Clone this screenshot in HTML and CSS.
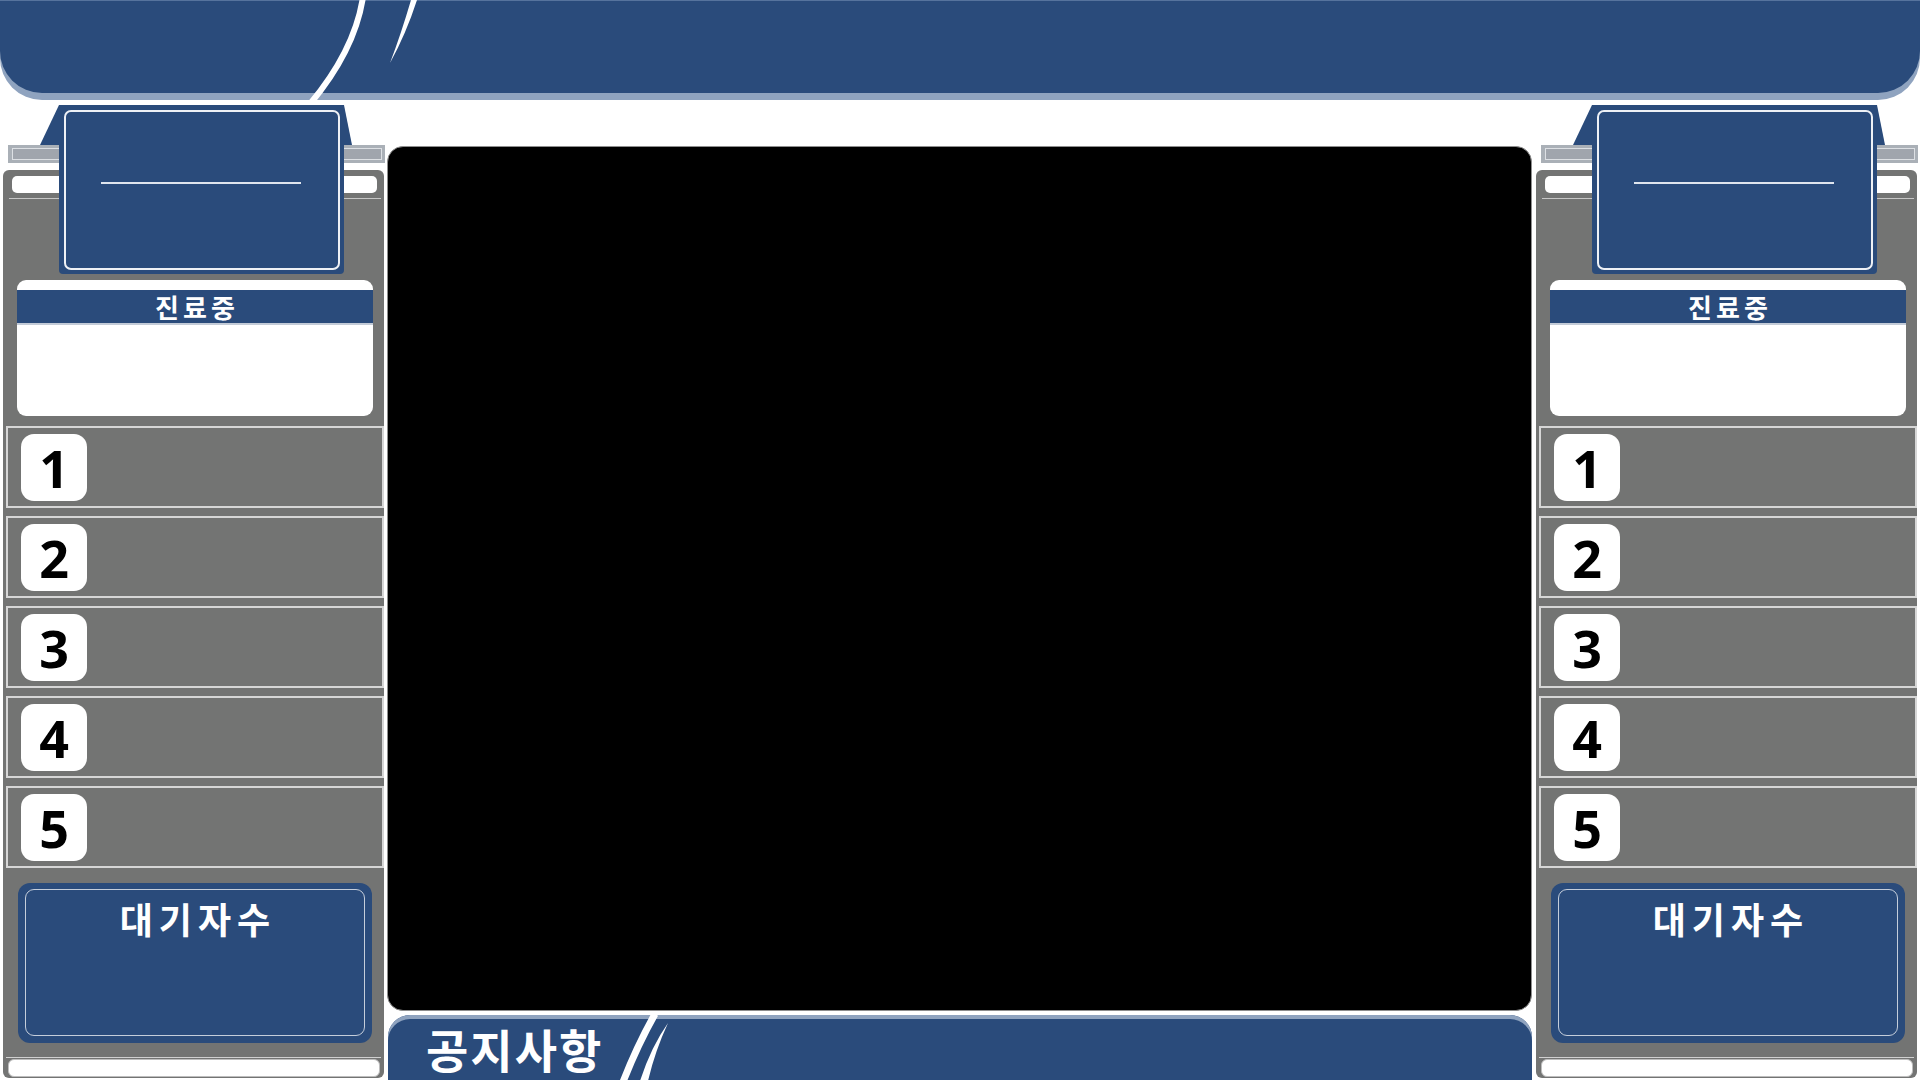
FILE: index.html
```html
<!DOCTYPE html>
<html lang="ko">
<head>
<meta charset="utf-8">
<title>대기 현황</title>
<link rel="stylesheet" href="styles.css">
</head>
<body>
<div class="screen">
  <header class="top">
    <svg class="top-deco" width="460" height="104" viewBox="0 0 460 104">
      <path d="M363,-3 Q355,50 310,104" fill="none" stroke="#ffffff" stroke-width="6"/>
      <path d="M411,0 L417,0 Q406,34 390,63 Q401,34 411,0 Z" fill="#ffffff"/>
    </svg>
  </header>
  <main class="stage">
    <aside class="side side-left">
      <div class="side-inner">
        <div class="tab"><div class="tab-frame"><div class="tab-line"></div></div></div>
        <div class="rail"><div class="rail-inner"></div></div>
        <div class="panel">
          <div class="panel-pill"></div>
          <div class="panel-rule"></div>
          <div class="status-card"><div class="status-head">진료중</div></div>
          <ul class="queue">
            <li class="queue-row"><span class="badge">1</span></li>
            <li class="queue-row"><span class="badge">2</span></li>
            <li class="queue-row"><span class="badge">3</span></li>
            <li class="queue-row"><span class="badge">4</span></li>
            <li class="queue-row"><span class="badge">5</span></li>
          </ul>
          <div class="wait-box"><div class="wait-frame"><span class="wait-title">대기자수</span></div></div>
          <div class="panel-rule panel-rule-bottom"></div>
          <div class="panel-pill panel-pill-bottom"></div>
        </div>
      </div>
    </aside>
    <section class="center">
      <div class="video"></div>
      <div class="notice">
        <span class="notice-title">공지사항</span>
        <svg class="notice-deco" width="300" height="66" viewBox="0 0 300 66">
          <path d="M267,-1 Q249,31 235,67" fill="none" stroke="#ffffff" stroke-width="7"/>
          <path d="M280,8 Q263,32 252,66 L260,66 Q267,36 280,8 Z" fill="#ffffff"/>
        </svg>
      </div>
    </section>
    <aside class="side side-right">
      <div class="side-inner">
        <div class="tab"><div class="tab-frame"><div class="tab-line"></div></div></div>
        <div class="rail"><div class="rail-inner"></div></div>
        <div class="panel">
          <div class="panel-pill"></div>
          <div class="panel-rule"></div>
          <div class="status-card"><div class="status-head">진료중</div></div>
          <ul class="queue">
            <li class="queue-row"><span class="badge">1</span></li>
            <li class="queue-row"><span class="badge">2</span></li>
            <li class="queue-row"><span class="badge">3</span></li>
            <li class="queue-row"><span class="badge">4</span></li>
            <li class="queue-row"><span class="badge">5</span></li>
          </ul>
          <div class="wait-box"><div class="wait-frame"><span class="wait-title">대기자수</span></div></div>
          <div class="panel-rule panel-rule-bottom"></div>
          <div class="panel-pill panel-pill-bottom"></div>
        </div>
      </div>
    </aside>
  </main>
</div>
</body>
</html>
```

FILE: styles.css
```css
* { box-sizing: border-box; }

html, body {
  margin: 0;
  padding: 0;
  background: #ffffff;
}

body {
  width: 1920px;
  height: 1080px;
  overflow: hidden;
  font-family: "Noto Sans CJK KR", "Noto Sans", sans-serif;
}

.screen {
  width: 1920px;
  height: 1080px;
  display: flex;
  flex-direction: column;
}

/* ---------- header ---------- */
.top {
  position: relative;
  height: 93px;
  flex: none;
  background: #2a4b7b;
  border-top: 1px solid #56739d;
  border-radius: 0 0 42px 42px;
  box-shadow: 0 7px 0 #8fa3bf;
  margin-bottom: 7px;
}

.top-deco {
  position: absolute;
  left: 0;
  top: -1px;
  overflow: visible;
}

/* ---------- stage ---------- */
.stage {
  flex: 1;
  display: grid;
  grid-template-columns: 387px 1145px 388px;
  min-height: 0;
}

.side-inner {
  position: relative;
  width: 387px;
  padding-top: 45px;
}

.side-right .side-inner {
  margin-left: 1px;
}

/* blue tab */
.tab {
  position: absolute;
  left: 59px;
  top: 5px;
  width: 285px;
  height: 169px;
  background: #2a4b7b;
  border-radius: 4px;
  z-index: 2;
}

.tab::before {
  content: "";
  position: absolute;
  left: -19px;
  top: 0;
  width: 312px;
  height: 40px;
  background: #2a4b7b;
  clip-path: polygon(19px 0, 304px 0, 100% 100%, 0 100%);
  z-index: -1;
}

.tab-frame {
  position: absolute;
  left: 5px;
  top: 5px;
  right: 4px;
  bottom: 4px;
  border: 2px solid #eef1f6;
  border-radius: 7px;
}

.tab-line {
  position: absolute;
  left: 35px;
  top: 70px;
  width: 200px;
  height: 2px;
  background: #dfe5ee;
}

/* grey rail */
.rail {
  margin-left: 8px;
  width: 377px;
  height: 18px;
  background: #aab0b7;
  padding: 3px 3px 3px 4px;
}

.rail-inner {
  height: 100%;
  background: #a0a5ad;
  border: 1px solid #dde0e4;
}

/* grey panel */
.panel {
  margin-top: 7px;
  margin-left: 3px;
  width: 381px;
  height: 908px;
  background: #737473;
  border-radius: 6px;
  padding-top: 6px;
  display: flex;
  flex-direction: column;
}

.panel-pill {
  margin: 0 7px 0 9px;
  height: 17px;
  background: #ffffff;
  border-radius: 5px;
  flex: none;
}

.panel-rule {
  margin: 5px 3px 0 6px;
  height: 1px;
  background: #c6c6c6;
  flex: none;
}

.panel-rule-bottom {
  margin: 14px 3px 0 3px;
  background: #d0d0d0;
}

.panel-pill-bottom {
  margin: 1px 4px 0 5px;
  height: 18px;
  border-radius: 6px;
  border: 1px solid #bdbdbd;
}

/* status card */
.status-card {
  margin: 81px 11px 0 14px;
  height: 136px;
  background: #ffffff;
  border-radius: 9px;
  padding-top: 10px;
  flex: none;
}

.status-head {
  height: 35px;
  background: #2a4b7b;
  border-bottom: 2px solid #c3cbd7;
  color: #ffffff;
  font-size: 26px;
  font-weight: 700;
  line-height: 33px;
  text-align: center;
  letter-spacing: 4px;
  text-indent: 4px;
}

/* queue */
.queue {
  list-style: none;
  margin: 10px 0 0 3px;
  padding: 0;
  display: flex;
  flex-direction: column;
  gap: 8px;
  flex: none;
}

.queue-row {
  height: 82px;
  border: 2px solid #d6d6d6;
  display: flex;
  align-items: center;
  padding-left: 13px;
}

.badge {
  width: 66px;
  height: 67px;
  border-radius: 13px;
  background: #ffffff;
  color: #000000;
  font-family: "Noto Sans", "Noto Sans CJK KR", sans-serif;
  font-size: 52px;
  font-weight: 700;
  line-height: 67px;
  text-align: center;
}

/* waiting count */
.wait-box {
  margin: 15px 12px 0 15px;
  height: 160px;
  background: #2a4b7b;
  border-radius: 12px;
  padding: 6px 7px 7px 7px;
  flex: none;
}

.wait-frame {
  height: 100%;
  border: 1px solid #c5cedb;
  border-radius: 9px;
  text-align: center;
  padding-top: 7px;
}

.wait-title {
  display: inline-block;
  color: #ffffff;
  font-size: 36px;
  font-weight: 700;
  line-height: 42px;
  letter-spacing: 6px;
  padding-left: 6px;
}

/* ---------- center ---------- */
.center {
  display: flex;
  flex-direction: column;
  min-height: 0;
}

.video {
  margin-top: 46px;
  height: 865px;
  background: #000000;
  border: 1px solid #8e8e8e;
  border-radius: 16px;
  flex: none;
}

.notice {
  position: relative;
  margin-top: 4px;
  margin-left: 1px;
  height: 65px;
  background: #2a4b7b;
  border-radius: 22px 22px 0 0;
  box-shadow: inset 0 4px 0 #8fa3bf;
  padding-left: 38px;
  flex: none;
}

.notice-title {
  display: block;
  color: #ffffff;
  font-size: 46px;
  font-weight: 700;
  line-height: 67px;
  letter-spacing: 2px;
}

.notice-deco {
  position: absolute;
  left: 0;
  top: 0;
  overflow: visible;
}
```
